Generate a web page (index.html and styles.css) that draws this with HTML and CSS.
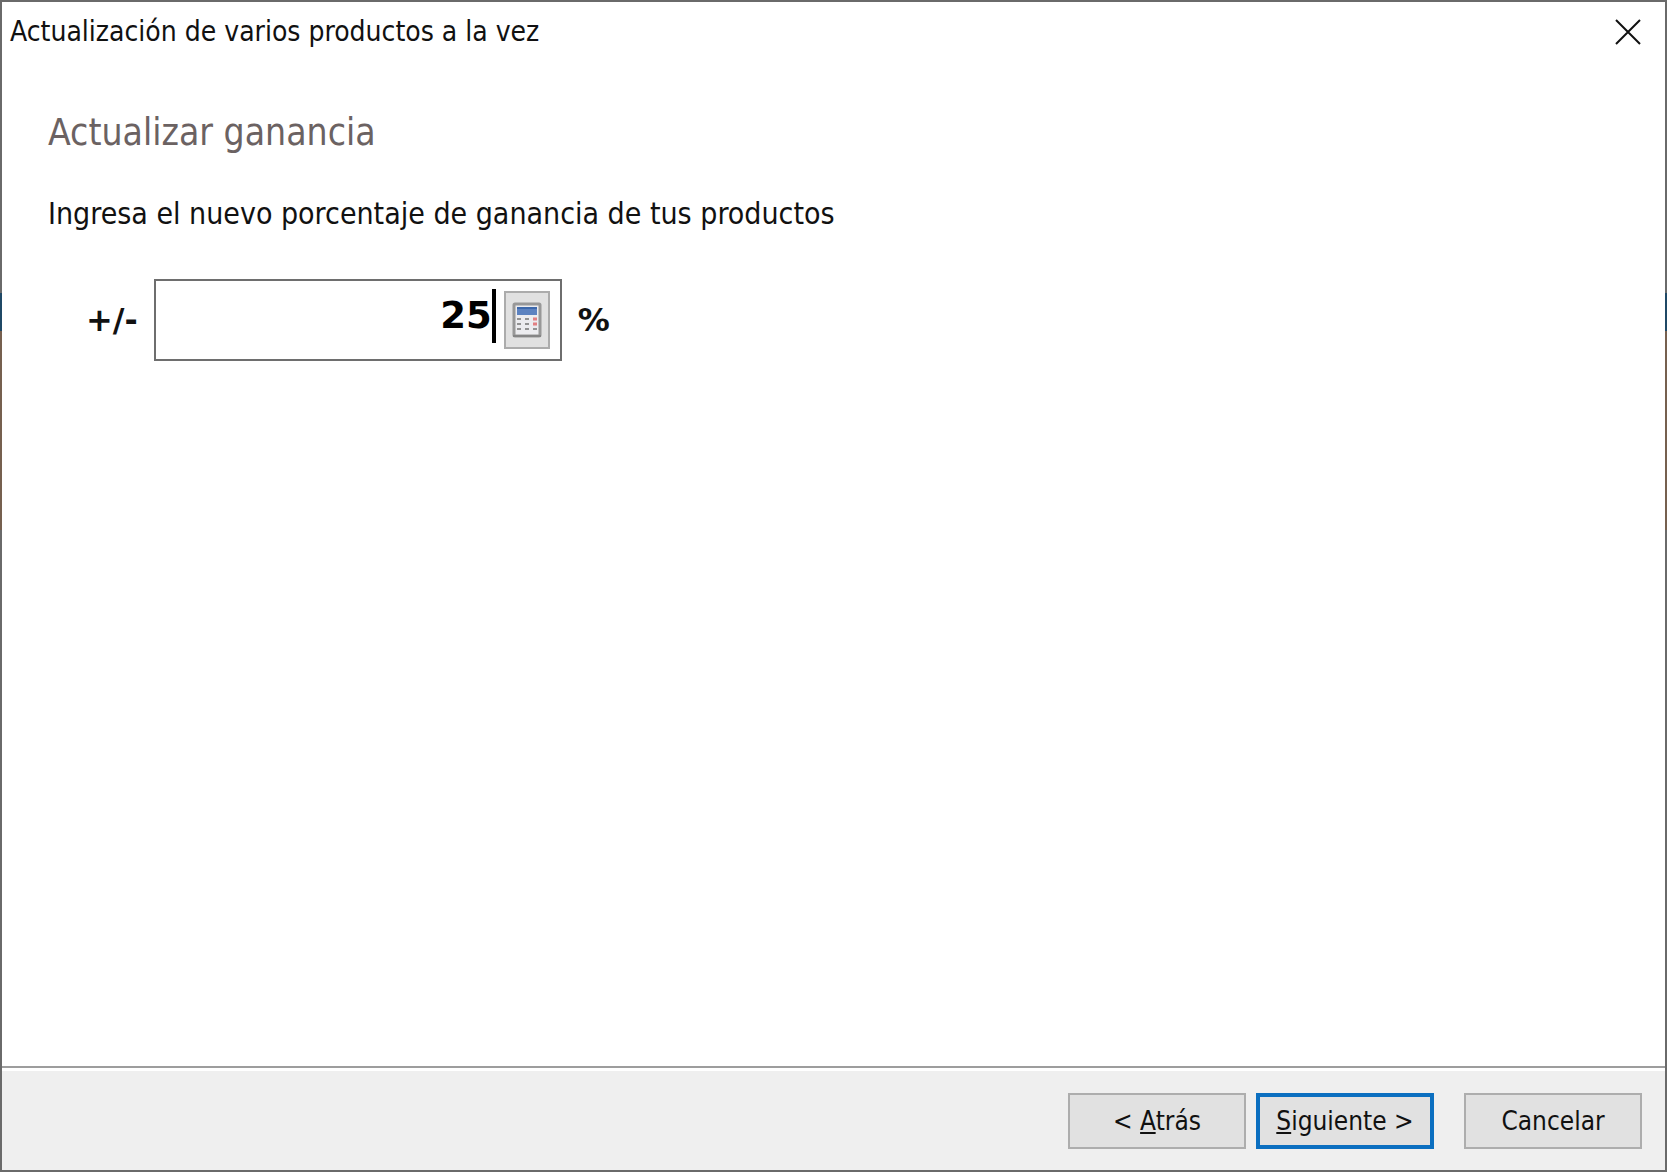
FILE: index.html
```html
<!DOCTYPE html>
<html lang="es">
<head>
    <meta charset="UTF-8">
    <meta name="viewport" content="width=device-width, initial-scale=1.0">
    <title>Actualización de varios productos a la vez</title>
    <link rel="stylesheet" href="styles.css">
</head>
<body>
    <form class="window">
        <header class="title-bar">
            <h1 class="title">Actualización de varios productos a la vez</h1>
            <button type="button" class="close" aria-label="Cerrar">
                <svg viewBox="0 0 26 26" width="26" height="26">
                    <path d="M1 1 L25 25 M25 1 L1 25" stroke="#111" stroke-width="2" fill="none"/>
                </svg>
            </button>
        </header>

        <main class="content">
            <h2 class="heading">Actualizar ganancia</h2>
            <label class="description" for="ganancia">Ingresa el nuevo porcentaje de ganancia de tus productos</label>

            <div class="amount-row">
                <span class="sign">+/-</span>
                <div class="amount-box">
                    <input type="text" id="ganancia" class="amount" value="25">
                    <span class="caret"></span>
                    <button type="button" class="calc" aria-label="Calculadora">
                        <svg viewBox="0 0 30 36" width="30" height="36">
                            <rect x="2" y="2" width="26" height="32" rx="1" fill="#ececef" stroke="#989898" stroke-width="3"/>
                            <path d="M1 34H29" stroke="#858585" stroke-width="2"/>
                            <rect x="5" y="5" width="20" height="8" fill="#5c82c0"/>
                            <path d="M5 6H25" stroke="#3d68ab" stroke-width="2"/>
                            <path d="M5 17H9 M13 17H17 M5 22H9 M13 22H17 M5 27H9 M13 27H17 M21 27H25" stroke="#929292" stroke-width="2"/>
                            <path d="M21 17H25 M21 22H25" stroke="#e27f82" stroke-width="3"/>
                        </svg>
                    </button>
                </div>
                <span class="sign">%</span>
            </div>
        </main>

        <footer class="footer">
            <button type="button" class="btn">&lt; <u>A</u>trás</button>
            <button type="submit" class="btn btn-default"><u>S</u>iguiente &gt;</button>
            <button type="button" class="btn btn-cancel">Cancelar</button>
        </footer>
    </form>
</body>
</html>
```
FILE: styles.css
```css
* {
    margin: 0;
    padding: 0;
    box-sizing: border-box;
}

body {
    font-family: Tahoma, "DejaVu Sans Condensed", "DejaVu Sans", sans-serif;
    font-stretch: condensed;
    font-size: 28px;
    line-height: 34px;
    color: #111;
    background: #fff;
}

.window {
    display: flex;
    flex-direction: column;
    min-height: 100vh;
    padding: 2px;
    background: linear-gradient(#6a6a6a 293px, #1f4866 293px, #1f4866 331px, #76604f 331px, #76604f 530px, #6a6a6a 530px);
}

.title-bar {
    display: flex;
    justify-content: space-between;
    align-items: center;
    height: 60px;
    padding: 0 24px 0 8px;
    background: #fff;
}

.title {
    font-size: 28px;
    font-weight: normal;
}

.close {
    display: flex;
    border: none;
    background: none;
}

.content {
    flex: 1;
    display: flex;
    flex-direction: column;
    align-items: flex-start;
    padding: 48px 46px;
    background: #fff;
}

.heading {
    font-size: 37px;
    font-weight: normal;
    line-height: 46px;
    color: #6b6262;
}

.description {
    margin-top: 41px;
    font-size: 30px;
}

.amount-row {
    display: flex;
    align-items: center;
    gap: 16px;
    margin-top: 48px;
    padding-left: 38px;
}

.sign {
    font-family: "DejaVu Sans", sans-serif;
    font-size: 32px;
    font-weight: bold;
    font-stretch: normal;
}

.amount-box {
    display: flex;
    width: 408px;
    height: 82px;
    padding: 8px 10px;
    border: 2px solid #6e6e6e;
}

.amount {
    flex: 1;
    min-width: 0;
    height: 52px;
    border: none;
    outline: none;
    font-family: "DejaVu Sans", sans-serif;
    font-size: 37px;
    font-weight: bold;
    text-align: right;
    color: #000;
}

.caret {
    width: 4px;
    height: 54px;
    margin-right: 8px;
    background: #000;
}

.calc {
    display: flex;
    justify-content: center;
    align-items: center;
    width: 46px;
    height: 58px;
    margin-top: 2px;
    border: 2px solid #acacac;
    background: #e1e1e1;
}

.footer {
    display: flex;
    justify-content: flex-end;
    gap: 10px;
    padding: 25px 23px 21px;
    border-top: 2px solid #9d9d9d;
    box-shadow: inset 0 3px #fff;
    background: #efefef;
}

.btn {
    width: 178px;
    height: 56px;
    border: 2px solid #adadad;
    background: #e1e1e1;
    font-family: inherit;
    font-size: 26px;
    font-stretch: condensed;
    color: #111;
}

.btn-default {
    border: 4px solid #0b6fc0;
}

.btn-cancel {
    margin-left: 20px;
}
```
